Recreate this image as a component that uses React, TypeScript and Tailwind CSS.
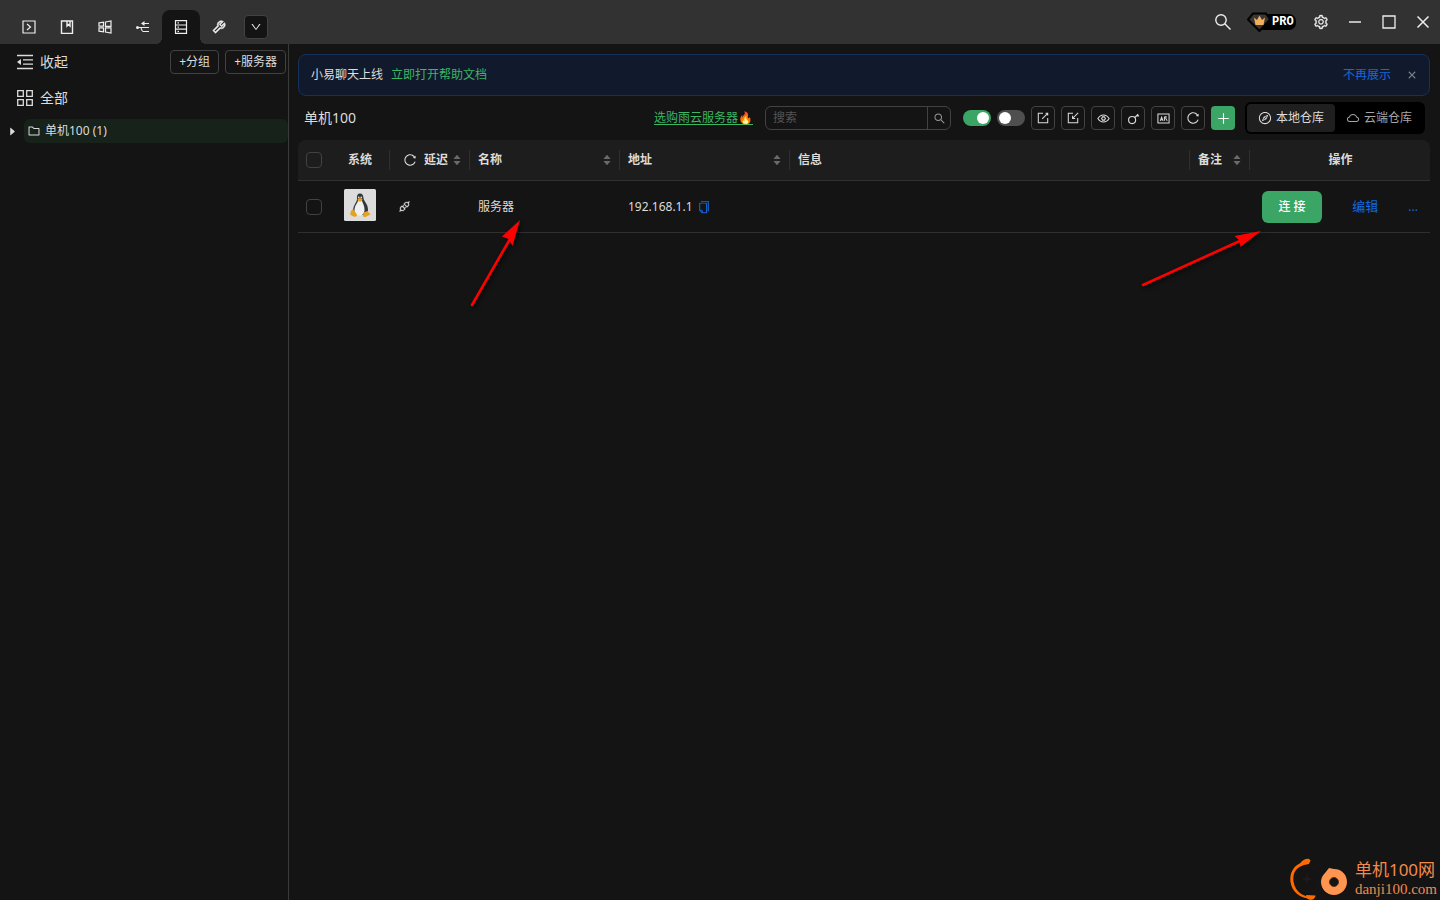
import { useState } from 'react'
import type { ReactNode } from 'react'
import clsx from 'clsx'
import {
  AiFillCaretDown,
  AiFillCaretRight,
  AiFillCaretUp,
  AiOutlineApi,
  AiOutlineClose,
  AiOutlineCloud,
  AiOutlineCompass,
  AiOutlineCopy,
  AiOutlineDown,
  AiOutlineFolder,
  AiOutlinePlus,
  AiOutlineReload,
  AiOutlineSearch,
  AiOutlineSetting,
  AiOutlineTool,
} from 'react-icons/ai'

const tabs = [
  { name: '终端', icon: <TerminalIcon /> },
  { name: '笔记', icon: <NoteIcon /> },
  { name: '远程桌面', icon: <WindowsIcon /> },
  { name: '端口转发', icon: <ForwardIcon /> },
  { name: '服务器', icon: <ServerIcon /> },
  { name: '工具', icon: <AiOutlineTool size={16} strokeWidth={36} /> },
]

const tools = [
  { name: '导出', icon: <ExportIcon /> },
  { name: '导入', icon: <ImportIcon /> },
  { name: '显示', icon: <EyeIcon /> },
  { name: '密钥', icon: <KeyIcon /> },
  { name: '凭据', icon: <CardIcon /> },
  { name: '刷新', icon: <AiOutlineReload size={14} /> },
]

const servers = [{ name: '服务器', address: '192.168.1.1' }]

export default function App() {
  return (
    <div className="relative flex min-h-screen flex-col overflow-hidden bg-[#141414] font-['Noto_Sans','Noto_Sans_CJK_SC',sans-serif] text-xs text-[#dcdcdc]">
      <TitleBar />
      <div className="flex flex-1">
        <Sidebar />
        <main className="min-w-0 flex-1 px-2.5 pt-2.5 pl-[9px]">
          <Notice />
          <Toolbar />
          <ServerTable />
        </main>
      </div>
      <Watermark />
    </div>
  )
}

function TitleBar() {
  const [active, setActive] = useState('服务器')

  return (
    <header className="flex h-11 items-stretch justify-between bg-[#323232]">
      <nav className="flex items-end pl-2.5 text-[#eee]">
        {tabs.map((tab) => (
          <button
            key={tab.name}
            aria-label={tab.name}
            onClick={() => setActive(tab.name)}
            className={clsx(
              'relative flex h-[34px] w-[38px] items-center justify-center',
              active === tab.name && 'rounded-t-lg bg-[#141414]',
            )}
          >
            {active === tab.name && (
              <>
                <span className="absolute bottom-0 -left-1.5 size-1.5 bg-[radial-gradient(circle_at_0_0,transparent_6px,#141414_6px)]" />
                <span className="absolute -right-1.5 bottom-0 size-1.5 bg-[radial-gradient(circle_at_100%_0,transparent_6px,#141414_6px)]" />
              </>
            )}
            {tab.icon}
          </button>
        ))}
        <button
          aria-label="更多"
          className="mb-[5px] ml-1.5 flex size-6 items-center justify-center rounded border border-[#424242] bg-[#141414]"
        >
          <AiOutlineDown size={12} />
        </button>
      </nav>
      <div className="flex items-center">
        <WindowButton label="搜索"><SearchIcon /></WindowButton>
        <span className="flex w-16 justify-center">
          <ProBadge />
        </span>
        <WindowButton label="设置"><AiOutlineSetting size={16} strokeWidth={20} /></WindowButton>
        <WindowButton label="最小化">
          <svg width="12" height="12" viewBox="0 0 12 12"><path d="M0 6h12" stroke="#bbb" strokeWidth="2" /></svg>
        </WindowButton>
        <WindowButton label="最大化">
          <svg width="14" height="14" viewBox="0 0 14 14"><path d="M1 1h12v12H1z" fill="none" stroke="#eee" strokeWidth="1.3" /></svg>
        </WindowButton>
        <WindowButton label="关闭">
          <svg width="12" height="12" viewBox="0 0 12 12"><path d="M.5.5l11 11M11.5.5l-11 11" stroke="#eee" strokeWidth="1.5" /></svg>
        </WindowButton>
      </div>
    </header>
  )
}

function WindowButton({ label, children }: { label: string; children: ReactNode }) {
  return (
    <button aria-label={label} className="flex h-11 w-[34px] items-center justify-center text-[#eee]">
      {children}
    </button>
  )
}

function ProBadge() {
  return (
    <span className="relative flex h-5 w-[50px] items-center">
      <svg className="absolute inset-0" width="50" height="20" viewBox="0 0 50 20">
        <rect x="10" y="2" width="39" height="16" rx="7" fill="#000" />
        <path d="M6 1.500h13l4 6L12.500 19 1 7.500z" fill="#3a3532" stroke="#000" strokeWidth="2" />
        <path d="M7 5.500l3 2.500 2.500-4.500L15 8l3-2.500L16.500 13h-8z" fill="#f0b060" />
      </svg>
      <span className="relative ml-[25px] font-['Liberation_Mono',monospace] text-xs leading-5 font-bold text-white">PRO</span>
    </span>
  )
}

function Sidebar() {
  return (
    <aside className="w-[289px] shrink-0 border-r border-[#3a3a3a] text-sm">
      <div className="flex h-9 items-center justify-between pr-0.5 pl-4">
        <button className="flex items-center gap-1.5">
          <CollapseIcon />
          收起
        </button>
        <div className="flex gap-1.5 text-xs">
          <button className="h-6 rounded border border-[#424242] px-2">+分组</button>
          <button className="h-6 rounded border border-[#424242] px-2">+服务器</button>
        </div>
      </div>
      <button className="flex h-9 w-full items-center gap-1.5 pl-4">
        <GridIcon />
        全部
      </button>
      <div className="mt-[3px] flex items-center text-xs">
        <button aria-label="展开" className="flex w-6 justify-center">
          <AiFillCaretRight size={11} />
        </button>
        <button className="flex h-6 flex-1 items-center gap-1 rounded-md bg-[#17221b] pl-[3px]">
          <AiOutlineFolder size={14} />
          单机100 (1)
        </button>
      </div>
    </aside>
  )
}

function Notice() {
  return (
    <div className="flex h-[42px] items-center rounded-lg border border-[#15325b] bg-[#111a2c] px-3">
      <span>小易聊天上线</span>
      <a href="#docs" className="ml-2 text-[#3cb565]">立即打开帮助文档</a>
      <button className="ml-auto text-[#1668dc]">不再展示</button>
      <button aria-label="关闭提示" className="ml-4 text-[#8a8d94]">
        <AiOutlineClose size={10} strokeWidth={30} />
      </button>
    </div>
  )
}

function Toolbar() {
  const [local, setLocal] = useState(true)

  return (
    <div className="flex h-11 items-center justify-between pr-[5px] pl-1.5">
      <h1 className="text-sm">单机100</h1>
      <div className="flex items-center gap-2.5">
        <div className="flex items-center gap-3">
          <a href="#buy" className="text-[#3cb565] underline underline-offset-2">选购雨云服务器🔥</a>
          <form className="flex h-6 w-[186px] rounded-md border border-[#424242]" onSubmit={(e) => e.preventDefault()}>
            <input
              aria-label="搜索"
              placeholder="搜索"
              className="min-w-0 flex-1 bg-transparent px-[7px] outline-none placeholder:text-[#555]"
            />
            <button aria-label="查找" className="flex w-[23px] items-center justify-center border-l border-[#424242] text-[#999]">
              <AiOutlineSearch size={13} />
            </button>
          </form>
          <div className="flex items-center gap-1.5">
            <Toggle label="显示分组" on />
            <Toggle label="精简模式" />
            {tools.map((tool) => (
              <button
                key={tool.name}
                aria-label={tool.name}
                className="flex size-6 items-center justify-center rounded border border-[#424242]"
              >
                {tool.icon}
              </button>
            ))}
            <button aria-label="新增" className="flex size-6 items-center justify-center rounded bg-[#3aa564] text-white">
              <AiOutlinePlus size={15} />
            </button>
          </div>
        </div>
        <div className="flex h-8 rounded-md bg-black p-0.5">
          <button
            aria-pressed={local}
            onClick={() => setLocal(true)}
            className={clsx('flex w-[88px] items-center justify-center gap-1 rounded', local ? 'bg-[#1f1f1f]' : 'text-[#a6a6a6]')}
          >
            <AiOutlineCompass size={14} />
            本地仓库
          </button>
          <button
            aria-pressed={!local}
            onClick={() => setLocal(false)}
            className={clsx('flex w-[88px] items-center justify-center gap-1 rounded', local ? 'text-[#a6a6a6]' : 'bg-[#1f1f1f]')}
          >
            <AiOutlineCloud size={14} />
            云端仓库
          </button>
        </div>
      </div>
    </div>
  )
}

function Toggle({ label, on = false }: { label: string; on?: boolean }) {
  return (
    <input
      type="checkbox"
      role="switch"
      aria-label={label}
      defaultChecked={on}
      className="h-4 w-7 appearance-none rounded-full bg-[#4f4f4f] p-0.5 before:block before:size-3 before:rounded-full before:bg-white checked:bg-[#3aa564] checked:before:ml-3"
    />
  )
}

function ServerTable() {
  return (
    <div className="relative">
      <table className="w-full table-fixed border-separate border-spacing-0">
        <colgroup>
          <col className="w-8" />
          <col className="w-[60px]" />
          <col className="w-20" />
          <col className="w-[150px]" />
          <col className="w-[170px]" />
          <col />
          <col className="w-[60px]" />
          <col className="w-[180px]" />
        </colgroup>
        <thead>
          <tr>
            <Head first><Check label="全选" /></Head>
            <Head divider><span className="block text-center">系统</span></Head>
            <Head divider sortable>
              <span className="flex items-center gap-[7px] pl-[5px]">
                <AiOutlineReload size={14} />
                延迟
              </span>
            </Head>
            <Head divider sortable>名称</Head>
            <Head divider sortable>地址</Head>
            <Head divider>信息</Head>
            <Head divider sortable>备注</Head>
            <Head last><span className="block text-center">操作</span></Head>
          </tr>
        </thead>
        <tbody>
          {servers.map((server) => (
            <tr key={server.name}>
              <Cell><Check label={server.name} /></Cell>
              <Cell><span className="flex justify-center pb-1"><Tux /></span></Cell>
              <Cell><AiOutlineApi size={13} strokeWidth={20} /></Cell>
              <Cell>{server.name}</Cell>
              <Cell>
                <span className="flex items-center gap-1">
                  {server.address}
                  <button aria-label="复制" className="text-[#1668dc]">
                    <AiOutlineCopy size={14} />
                  </button>
                </span>
              </Cell>
              <Cell />
              <Cell />
              <Cell>
                <span className="flex items-center justify-between px-1">
                  <button className="h-8 w-[60px] rounded-md bg-[#3aa564] font-medium text-white">连 接</button>
                  <a href="#edit" className="text-[13px] text-[#1668dc]">编辑</a>
                  <button aria-label="更多操作" className="text-[#1668dc]">...</button>
                </span>
              </Cell>
            </tr>
          ))}
        </tbody>
      </table>
      <svg className="pointer-events-none absolute top-[78px] left-[170px] drop-shadow-[2px_2px_2px_rgba(0,0,0,0.6)]" width="56" height="90" viewBox="0 0 56 90">
        <path d="M4 87L42 21" stroke="#f00" strokeWidth="2.600" strokeLinecap="round" />
        <path d="M52 2L34 18.500l6.500 2.500 4 7z" fill="#f00" />
      </svg>
      <svg className="pointer-events-none absolute top-[88px] right-[168px] drop-shadow-[2px_2px_2px_rgba(0,0,0,0.6)]" width="122" height="60" viewBox="0 0 122 60">
        <path d="M3 57L102 12" stroke="#f00" strokeWidth="2.600" strokeLinecap="round" />
        <path d="M121 3L94.500 8l5 4.500 1 6.500z" fill="#f00" />
      </svg>
    </div>
  )
}

function Head({ children, first, last, divider, sortable }: { children: ReactNode; first?: boolean; last?: boolean; divider?: boolean; sortable?: boolean }) {
  return (
    <th
      className={clsx(
        'h-[41px] border-b border-[#303030] bg-[#1d1d1d] p-0 text-left font-semibold',
        first && 'rounded-tl-lg',
        last && 'rounded-tr-lg',
      )}
    >
      <div className={clsx('flex h-5 items-center justify-between pr-[7px] pl-2', divider && 'border-r border-[#303030]')}>
        <span className="flex-1 whitespace-nowrap">{children}</span>
        {sortable && (
          <span className="flex flex-col text-[#6b6b6b]">
            <AiFillCaretUp size={10} className="-mb-1" />
            <AiFillCaretDown size={10} />
          </span>
        )}
      </div>
    </th>
  )
}

function Cell({ children }: { children?: ReactNode }) {
  return <td className="h-[52px] border-b border-[#303030] px-2 py-0">{children}</td>
}

function Check({ label }: { label: string }) {
  return (
    <input
      type="checkbox"
      aria-label={label}
      className="block size-4 appearance-none rounded border border-[#424242] checked:bg-[#3aa564]"
    />
  )
}

function Watermark() {
  return (
    <div className="absolute right-[3px] bottom-0 flex items-center gap-1 text-[#f28a4c]">
      <svg width="62" height="42" viewBox="0 0 62 42">
        <path d="M20 4C7 3 0 13 1.500 24S14 43 25 39.500c-9 0-19-5-20.500-16S10 7 20 6z" fill="#ff6a00" />
        <path d="M11 5.500C14 1 20-1 21.500 2.500L20 6l-6 .5zM17 37l9.500.5c0 3-4 6-8.500 3z" fill="#ff6a00" />
        <circle cx="19" cy="21" r="13" fill="none" stroke="#1d1615" />
        <path d="M18 17v8M14 21h8" stroke="#2c1d1a" />
        <path d="M36 15l4-5 5 1c8 0 13 6 13 13s-6 13-13 13-13-6-13-13c0-3 1-6 4-9z" fill="#ff9550" />
        <circle cx="45" cy="24" r="4.500" fill="#141414" stroke="#5a3018" />
      </svg>
      <div className="leading-5">
        <div className="text-[17px]">单机100网</div>
        <div className="font-['Liberation_Serif',serif] text-[15px] leading-[18px]">danji100.com</div>
      </div>
    </div>
  )
}

function Stroke({ size = 14, width = 1.2, children }: { size?: number; width?: number; children: ReactNode }) {
  return (
    <svg width={size} height={size} viewBox="0 0 14 14" fill="none" stroke="currentColor" strokeWidth={width}>
      {children}
    </svg>
  )
}

function TerminalIcon() {
  return <Stroke><path d="M1 1h12v12H1zM5 4l3.500 3L5 10" /></Stroke>
}

function NoteIcon() {
  return <Stroke width={1.4}><path d="M1.500 1h11v12.500h-11zM7 1v5l1.500-1.500L10 6V1" /></Stroke>
}

function WindowsIcon() {
  return <Stroke><path d="M1 2.800l4.500-.6v4H1zM7.500 2l5.500-1v5.300H7.500zM1 7.800h4.500v4L1 11.200zM7.500 7.800H13V13l-5.500-1z" /></Stroke>
}

function ForwardIcon() {
  return (
    <Stroke>
      <path d="M6 3.500h7M1 7.500h12M7 11.500h6M4.500 7.500c1 0 1 4 2.500 4" />
      <path d="M8.500 1v5L5 3.500z" fill="currentColor" stroke="none" />
      <circle cx="1.500" cy="7.500" r="1.500" fill="currentColor" stroke="none" />
    </Stroke>
  )
}

function ServerIcon() {
  return <Stroke><path d="M1.500.6h11v12.800h-11zM1.500 5h11M1.500 9.200h11M3.500 2.800h1.500M3.500 7.100h1.500M3.500 11.400h1.500" /></Stroke>
}

function SearchIcon() {
  return (
    <svg width="16" height="16" viewBox="0 0 16 16" fill="none" stroke="currentColor" strokeWidth="1.400">
      <circle cx="6" cy="6" r="5.200" />
      <path d="M9.800 9.800l5.700 5.700" />
    </svg>
  )
}

function CollapseIcon() {
  return (
    <svg width="18" height="16" viewBox="0 0 18 16" fill="none" stroke="currentColor" strokeWidth="1.300">
      <path d="M1 1.500h16M7 5.800h10M7 10.200h10M1 14.500h16" />
      <path d="M1 8l4-3v6z" fill="currentColor" stroke="none" />
    </svg>
  )
}

function GridIcon() {
  return (
    <svg width="18" height="16" viewBox="0 0 18 16" fill="none" stroke="currentColor" strokeWidth="1.300">
      <path d="M1.700.7h5.600v5.600H1.700zM10.700.7h5.600v5.600h-5.600zM1.700 9.700h5.600v5.600H1.700zM10.700 9.700h5.600v5.600h-5.600z" />
    </svg>
  )
}

function ExportIcon() {
  return <Stroke size={12}><path d="M7 1.500H1.500v11h11V7M6 8l6.500-6.500M10 1.500h2.500V4" /></Stroke>
}

function ImportIcon() {
  return <Stroke size={12}><path d="M7 1.500H1.500v11h11V7M13 1L7 7M6.500 4.500v3h3" /></Stroke>
}

function EyeIcon() {
  return (
    <Stroke size={13}>
      <path d="M1 7c1.500-2.500 3.500-3.800 6-3.800s4.500 1.300 6 3.800c-1.500 2.500-3.500 3.800-6 3.800S2.500 9.500 1 7z" />
      <path d="M6 5.200h2L9 7 8 8.800H6L5 7z" />
    </Stroke>
  )
}

function KeyIcon() {
  return (
    <Stroke size={13}>
      <circle cx="5.500" cy="8.700" r="3.800" />
      <path d="M8.200 6L12 2.200M10 4.200h3" />
    </Stroke>
  )
}

function CardIcon() {
  return <Stroke size={13} width={1.1}><path d="M1 2.200h12v9.600H1zM3.500 9.500l1.500-4 1.500 4M4 8.300h2M8 5v4.500M8 5.200h1.800L9.400 7l1.600 2.500" /></Stroke>
}

function Tux() {
  return (
    <svg width="32" height="32" viewBox="0 0 32 32">
      <rect width="32" height="32" rx="1.500" fill="#dcdcdc" />
      <path d="M16 4.500c-2.500 0-3.500 2-3 5.500 0 3.500-4 6-4 12l4 4h8l3-4c.5-7-4-9-4.500-13-.3-3-1-4.500-3.500-4.500z" fill="#33373b" />
      <path d="M14 12h4c1 3 2.500 5 2.500 8.500S19 26.500 15.500 26.500 10 25 10.500 20.500 13 15 14 12z" fill="#f0f0f0" />
      <circle cx="14.700" cy="8.300" r=".9" fill="#ddd" />
      <circle cx="17.300" cy="8.300" r=".9" fill="#ddd" />
      <path d="M13.500 10l2.500-1 2.500 1-.5 2-2 .8-2-.8z" fill="#e6a31e" />
      <path d="M9 20l4 5.500c0 2-1.500 2.500-3.500 2L6 25.500l1-3.500zM19.500 23.500l4-1.500 3 3.500-4 2c-2 1-3.500.5-3.500-1z" fill="#e6a31e" />
    </svg>
  )
}
